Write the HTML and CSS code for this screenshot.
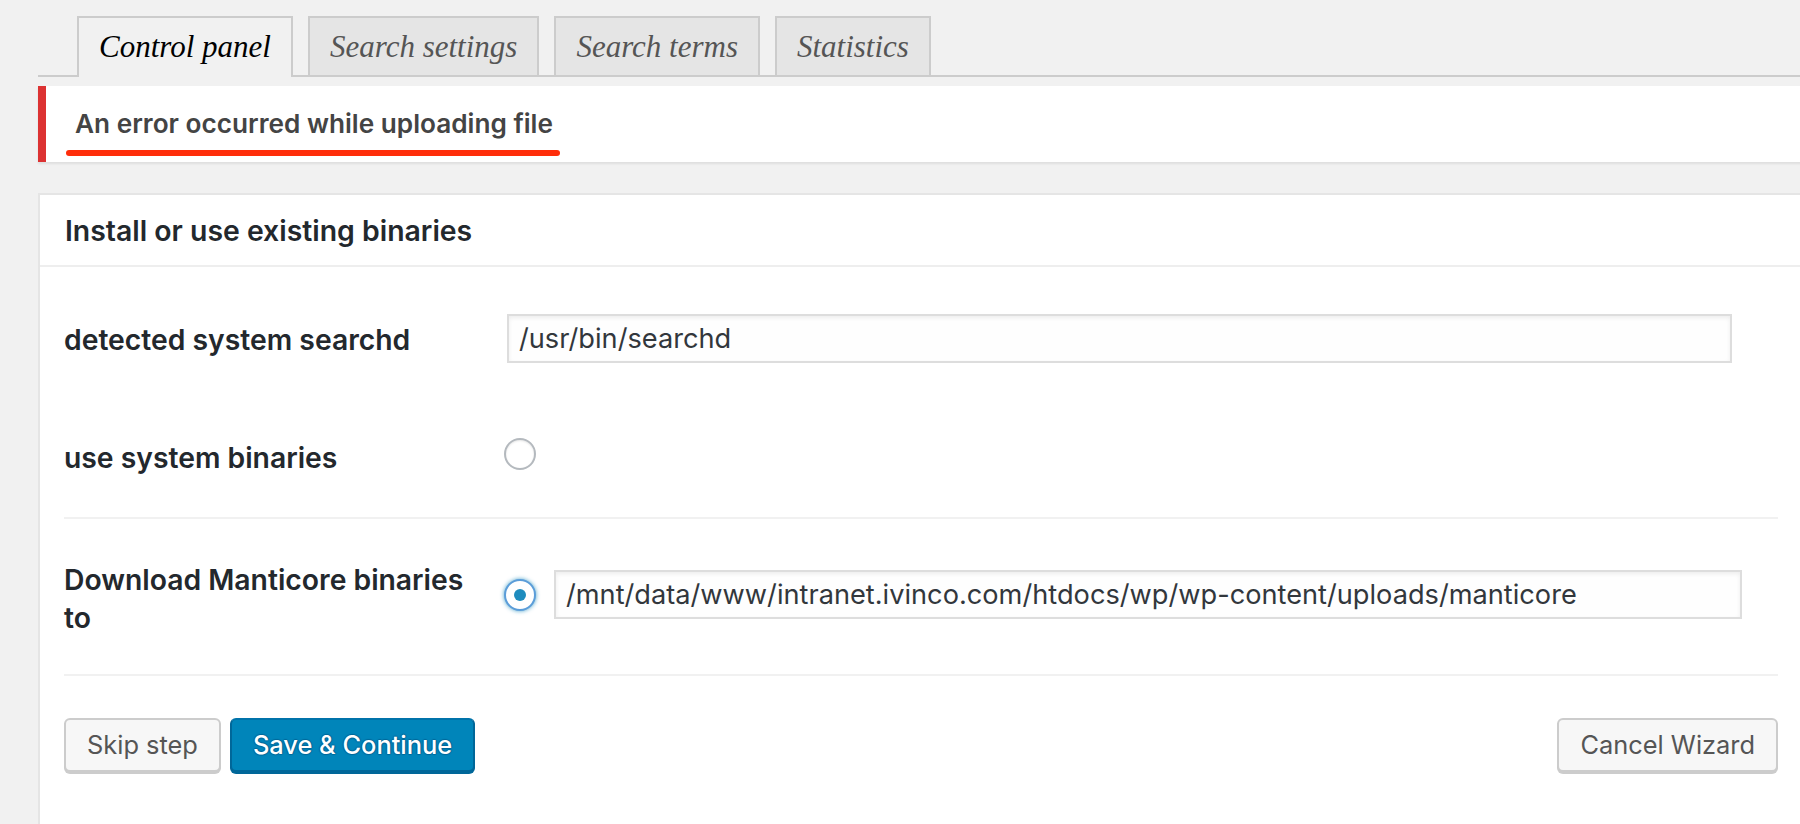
FILE: index.html
```html
<!DOCTYPE html>
<html lang="en">
<head>
<meta charset="utf-8">
<title>Manticore wizard</title>
<link rel="stylesheet" href="styles.css">
</head>
<body>
<div class="wrap">
  <nav class="tabs">
    <a class="tab active">Control panel</a>
    <a class="tab">Search settings</a>
    <a class="tab">Search terms</a>
    <a class="tab">Statistics</a>
  </nav>

  <div class="notice">
    <p class="notice-text">An error occurred while uploading file</p>
    <span class="annotation"></span>
  </div>

  <div class="card">
    <h2 class="card-title">Install or use existing binaries</h2>
    <div class="card-body">
      <div class="section section-first">
        <div class="row row-input">
          <div class="label">detected system searchd</div>
          <div class="control">
            <div class="input input-sys">/usr/bin/searchd</div>
          </div>
        </div>
        <div class="row row-radio">
          <div class="label label-radio">use system binaries</div>
          <div class="control">
            <span class="radio"></span>
          </div>
        </div>
      </div>
      <div class="section section-second">
        <div class="row row-top">
          <div class="label label-wrap">Download Manticore binaries to</div>
          <div class="control control-offset">
            <span class="radio checked"></span>
            <div class="input input-dl">/mnt/data/www/intranet.ivinco.com/htdocs/wp/wp-content/uploads/manticore</div>
          </div>
        </div>
      </div>
      <div class="actions">
        <div class="actions-left">
          <button class="btn">Skip step</button>
          <button class="btn btn-primary">Save &amp; Continue</button>
        </div>
        <button class="btn">Cancel Wizard</button>
      </div>
    </div>
  </div>
</div>
</body>
</html>
```

FILE: styles.css
```css
html, body {
  margin: 0;
  padding: 0;
  background: #f1f1f1;
  overflow: hidden;
}

body {
  width: 1800px;
  height: 824px;
  font-family: "Inter", "Noto Sans", "Liberation Sans", sans-serif;
  color: #23282d;
}

.wrap {
  margin-left: 38px;
  margin-right: -4px;
  padding-top: 16px;
}

/* Tabs */
.tabs {
  display: flex;
  align-items: flex-end;
  gap: 15px;
  padding-left: 39px;
  border-bottom: 2px solid #cccccc;
}

.tab {
  display: block;
  height: 57px;
  line-height: 57px;
  padding: 0 20px;
  border: 2px solid #cccccc;
  border-bottom: none;
  background: #e5e5e5;
  color: #555555;
  font-family: "Liberation Serif", "DejaVu Serif", serif;
  font-style: italic;
  font-size: 31px;
  white-space: nowrap;
}

.tab.active {
  background: #f1f1f1;
  color: #000000;
  height: 59px;
  margin-bottom: -2px;
}

/* Notice */
.notice {
  position: relative;
  margin-top: 9px;
  background: #ffffff;
  border-left: 8px solid #dc3232;
  box-shadow: 0 2px 2px rgba(0, 0, 0, 0.08);
  height: 76px;
  box-sizing: border-box;
  padding: 20px 0 0 29px;
}

.notice-text {
  margin: 0;
  font-size: 26.2px;
  line-height: 36px;
  font-weight: 600;
  color: #444444;
}

.annotation {
  position: absolute;
  left: 20px;
  top: 64px;
  width: 494px;
  height: 6px;
  border-radius: 3px;
  background: #ff2d0a;
}

/* Card */
.card {
  margin-top: 31px;
  background: #ffffff;
  border: 2px solid #e5e5e5;
  height: 700px;
}

.card-title {
  margin: 0;
  padding: 16px 26px 14px 25px;
  font-size: 28.4px;
  line-height: 40px;
  font-weight: 600;
  color: #23282d;
  border-bottom: 2px solid #eeeeee;
}

.card-body {
  padding: 0 24px;
}

.section {
  border-bottom: 2px solid #f1f1f1;
}

.section-first {
  padding: 47px 0 43px;
  display: flex;
  flex-direction: column;
  gap: 71px;
}

.section-second {
  padding: 40px 0 37px;
}

.row {
  display: flex;
  align-items: center;
}

.row-top {
  align-items: flex-start;
}

.label {
  width: 400px;
  padding-right: 40px;
  flex: none;
  font-size: 28.3px;
  line-height: 40px;
  font-weight: 600;
  color: #23282d;
  padding-top: 2px;
}

.label-radio {
  padding-top: 7px;
}

.label-wrap {
  line-height: 38px;
  padding-top: 2px;
}

.row-radio {
  height: 40px;
}

.control {
  display: flex;
  align-items: center;
  gap: 18px;
}

.control-offset {
  margin-top: 11px;
}

.input {
  box-sizing: border-box;
  height: 49px;
  border: 2px solid #dddddd;
  box-shadow: inset 0 2px 4px rgba(0, 0, 0, 0.07);
  background: #fefefe;
  padding: 0 10px;
  font-size: 27.2px;
  line-height: 45px;
  color: #32373c;
  white-space: nowrap;
  overflow: hidden;
}

.input-sys {
  width: 1225px;
  margin-left: 3px;
}

.input-dl {
  width: 1188px;
}

.radio {
  box-sizing: border-box;
  display: inline-block;
  width: 32px;
  height: 32px;
  border-radius: 50%;
  border: 2px solid #b4b9be;
  background: #ffffff;
  box-shadow: inset 0 1px 2px rgba(0, 0, 0, 0.1);
  position: relative;
  flex: none;
}

.radio.checked {
  border-color: #5b9dd9;
  box-shadow: 0 0 4px rgba(30, 140, 190, 0.8);
}

.radio.checked::after {
  content: "";
  position: absolute;
  left: 8px;
  top: 8px;
  width: 12px;
  height: 12px;
  border-radius: 50%;
  background: #1e8cbe;
}

/* Actions */
.actions {
  display: flex;
  justify-content: space-between;
  align-items: flex-start;
  padding-top: 42px;
}

.actions-left {
  display: flex;
  gap: 9px;
}

.btn {
  box-sizing: border-box;
  height: 54px;
  padding: 0 21px;
  border: 2px solid #cccccc;
  border-radius: 6px;
  background: #f7f7f7;
  box-shadow: 0 2px 0 #cccccc;
  color: #555555;
  font-family: "Inter", "Noto Sans", "Liberation Sans", sans-serif;
  font-size: 25.4px;
  line-height: 50px;
  font-weight: 400;
  white-space: nowrap;
}

.btn-primary {
  background: #0085ba;
  border-color: #0073aa #006799 #006799;
  box-shadow: 0 2px 0 #006799;
  color: #ffffff;
  font-weight: 500;
  text-shadow: 0 -1px 1px #006799, 1px 0 1px #006799, 0 1px 1px #006799, -1px 0 1px #006799;
}
```
